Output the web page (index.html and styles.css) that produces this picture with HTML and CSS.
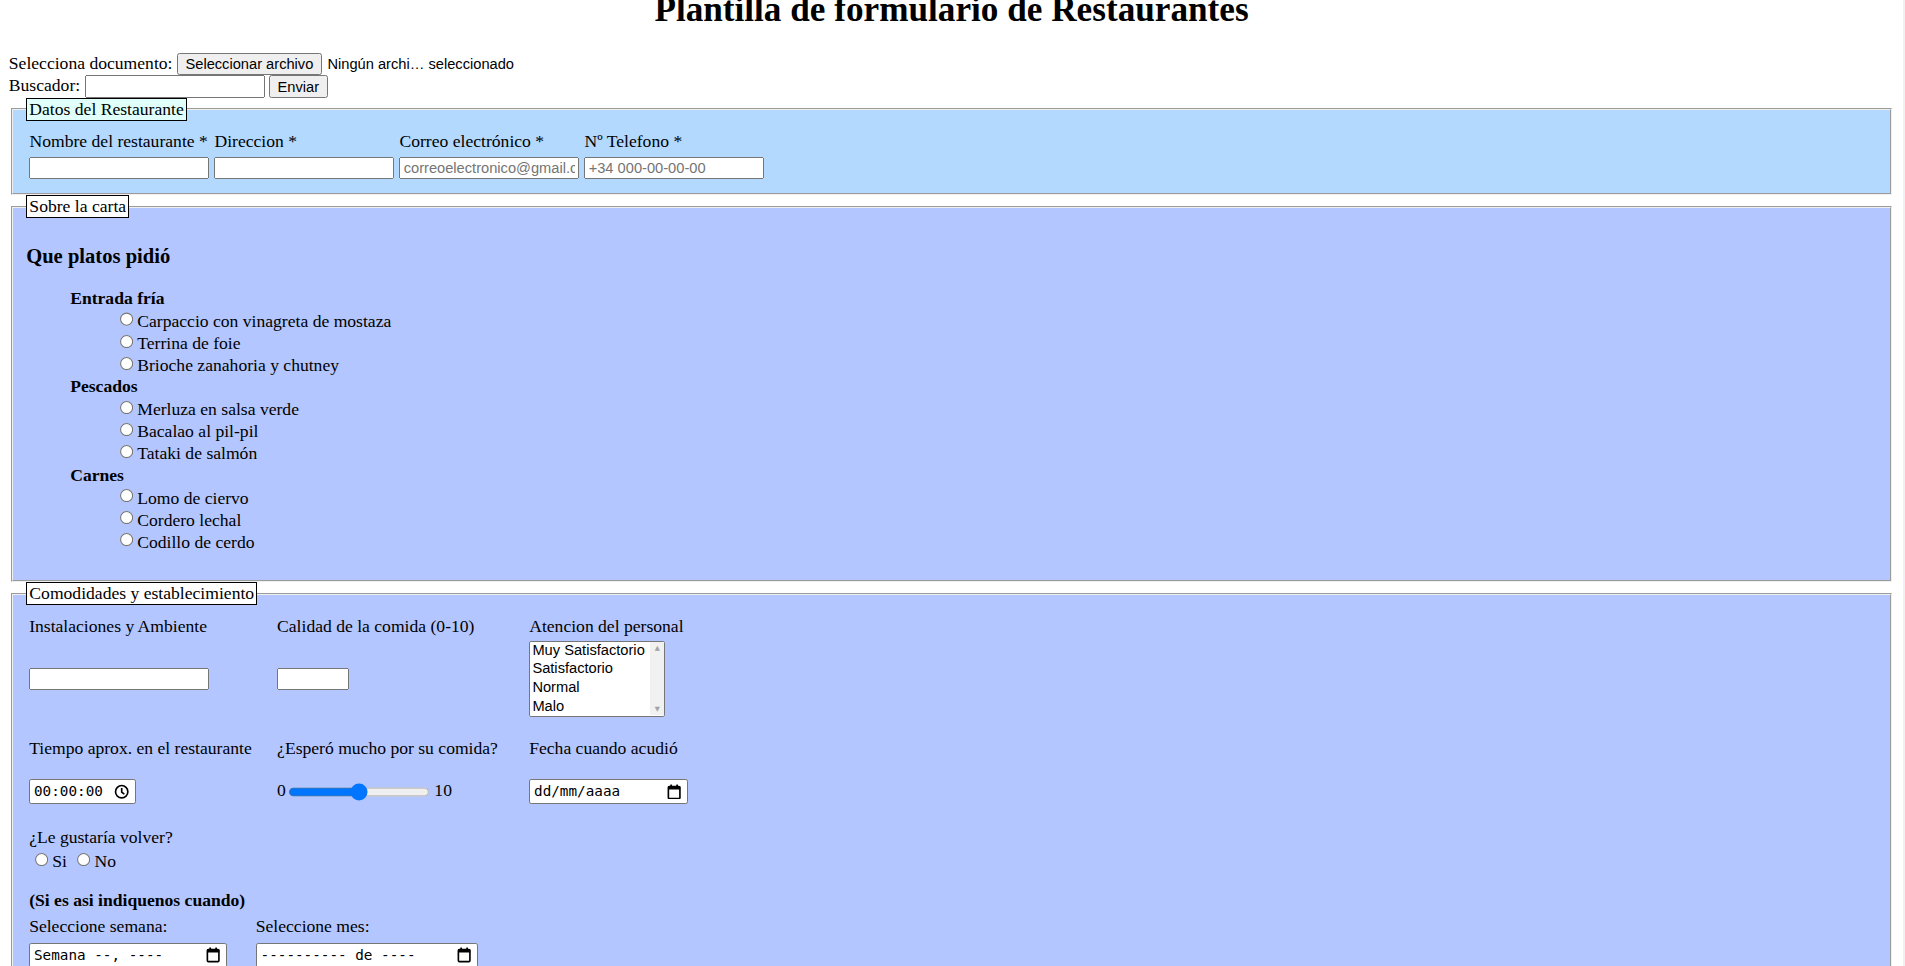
FILE: index.html
```html
<!DOCTYPE html>
<html lang="es">
<head>
<meta charset="utf-8">
<title>Plantilla de formulario de Restaurantes</title>
<link rel="stylesheet" href="styles.css">
</head>
<body>
<h1 class="title">Plantilla de formulario de Restaurantes</h1>
<form class="form">
  <div class="line">Selecciona documento: <button type="button" class="file-btn">Seleccionar archivo</button><span class="file-name">Ningún archi… seleccionado</span></div>
  <div class="line">Buscador: <input type="text" class="field"> <input type="submit" class="btn" value="Enviar"></div>

  <fieldset class="box box-datos">
    <legend class="tag tag-cyan">Datos del Restaurante</legend>
    <div class="datos-grid">
      <label class="lbl">Nombre del restaurante *</label>
      <label class="lbl">Direccion *</label>
      <label class="lbl">Correo electrónico *</label>
      <label class="lbl">Nº Telefono *</label>
      <input type="text" class="field">
      <input type="text" class="field">
      <input type="email" class="field" placeholder="correoelectronico@gmail.com">
      <input type="tel" class="field" placeholder="+34 000-00-00-00">
    </div>
  </fieldset>

  <fieldset class="box box-lila">
    <legend class="tag">Sobre la carta</legend>
    <h3 class="carta-title">Que platos pidió</h3>
    <div class="menu">
      <div class="group">
        <b class="group-name">Entrada fría</b>
        <div class="dishes">
          <label class="dish"><input type="radio" name="entrada" class="radio">Carpaccio con vinagreta de mostaza</label>
          <label class="dish"><input type="radio" name="entrada" class="radio">Terrina de foie</label>
          <label class="dish"><input type="radio" name="entrada" class="radio">Brioche zanahoria y chutney</label>
        </div>
      </div>
      <div class="group">
        <b class="group-name">Pescados</b>
        <div class="dishes">
          <label class="dish"><input type="radio" name="pescado" class="radio">Merluza en salsa verde</label>
          <label class="dish"><input type="radio" name="pescado" class="radio">Bacalao al pil-pil</label>
          <label class="dish"><input type="radio" name="pescado" class="radio">Tataki de salmón</label>
        </div>
      </div>
      <div class="group">
        <b class="group-name">Carnes</b>
        <div class="dishes">
          <label class="dish"><input type="radio" name="carne" class="radio">Lomo de ciervo</label>
          <label class="dish"><input type="radio" name="carne" class="radio">Cordero lechal</label>
          <label class="dish"><input type="radio" name="carne" class="radio">Codillo de cerdo</label>
        </div>
      </div>
    </div>
  </fieldset>

  <fieldset class="box box-lila">
    <legend class="tag">Comodidades y establecimiento</legend>
    <div class="amenities">
      <label class="lbl">Instalaciones y Ambiente</label>
      <label class="lbl">Calidad de la comida (0-10)</label>
      <label class="lbl">Atencion del personal</label>
      <div class="ctl"><input type="text" class="field"></div>
      <div class="ctl"><input type="text" class="field field-short"></div>
      <div class="ctl">
        <span class="list-wrap">
          <select class="rating" size="4">
            <option>Muy Satisfactorio</option>
            <option>Satisfactorio</option>
            <option>Normal</option>
            <option>Malo</option>
            <option>Muy Malo</option>
          </select>
          <span class="list-bar"><span class="list-arrow">▲</span><span class="list-arrow">▼</span></span>
        </span>
      </div>
      <label class="lbl lbl-2">Tiempo aprox. en el restaurante</label>
      <label class="lbl lbl-2">¿Esperó mucho por su comida?</label>
      <label class="lbl lbl-2">Fecha cuando acudió</label>
      <div class="ctl-2">
        <span class="fake fake-time"><span class="fake-text">00:00:00</span><svg class="ico" width="14" height="14" viewBox="0 0 14 14"><circle cx="7" cy="7" r="5.6" fill="none" stroke="#000" stroke-width="1.5"/><path d="M7 3.6V7.3L9.4 9.2" fill="none" stroke="#000" stroke-width="1.5"/></svg></span>
      </div>
      <div class="ctl-2 range-wrap">0<input type="range" class="range" min="0" max="10" value="5">10</div>
      <div class="ctl-2">
        <span class="fake fake-date"><span class="fake-text">dd/mm/aaaa</span><svg class="ico" width="13" height="14" viewBox="0 0 13 14"><rect x="1.25" y="2.25" width="10.5" height="11" rx="1" fill="none" stroke="#000" stroke-width="1.5"/><rect x="1" y="2" width="11" height="3" fill="#000"/><rect x="3" y="0.5" width="1.6" height="2.5" fill="#000"/><rect x="8.4" y="0.5" width="1.6" height="2.5" fill="#000"/></svg></span>
      </div>
    </div>

    <div class="return">
      <div class="return-q">¿Le gustaría volver?</div>
      <div class="return-opts"><label><input type="radio" name="volver" class="radio">Si</label> <label><input type="radio" name="volver" class="radio">No</label></div>
    </div>

    <p class="when"><b>(Si es asi indiquenos cuando)</b></p>
    <div class="period">
      <div class="period-item">
        <label class="lbl">Seleccione semana:</label>
        <span class="fake fake-week"><span class="fake-text">Semana --, ----</span><svg class="ico" width="13" height="14" viewBox="0 0 13 14"><rect x="1.25" y="2.25" width="10.5" height="11" rx="1" fill="none" stroke="#000" stroke-width="1.5"/><rect x="1" y="2" width="11" height="3" fill="#000"/><rect x="3" y="0.5" width="1.6" height="2.5" fill="#000"/><rect x="8.4" y="0.5" width="1.6" height="2.5" fill="#000"/></svg></span>
      </div>
      <div class="period-item">
        <label class="lbl">Seleccione mes:</label>
        <span class="fake fake-month"><span class="fake-text">---------- de ----</span><svg class="ico" width="13" height="14" viewBox="0 0 13 14"><rect x="1.25" y="2.25" width="10.5" height="11" rx="1" fill="none" stroke="#000" stroke-width="1.5"/><rect x="1" y="2" width="11" height="3" fill="#000"/><rect x="3" y="0.5" width="1.6" height="2.5" fill="#000"/><rect x="8.4" y="0.5" width="1.6" height="2.5" fill="#000"/></svg></span>
      </div>
    </div>
  </fieldset>
</form>
</body>
</html>
```

FILE: styles.css
```css
html {
  overflow: hidden;
  background: #fff;
  border-right: 2px solid #f1f1f1;
}

body {
  zoom: 1.1;
  margin: 0 8px 8px;
  font-family: "Liberation Serif", "Times New Roman", serif;
  font-size: 16px;
  color: #000;
}

.title {
  font-size: 32px;
  font-weight: bold;
  text-align: center;
  margin: -9.4px 0 21.44px;
}

input,
button,
select {
  font-family: "Liberation Sans", Arial, sans-serif;
  font-size: 13.333px;
}

.file-btn {
  margin: 0 5px 0 0;
}

.file-name {
  font-family: "Liberation Sans", Arial, sans-serif;
  font-size: 13.333px;
}

.field {
  width: 163.6px;
  box-sizing: border-box;
}

.field-short {
  width: 65.5px;
}

.box {
  margin: 0 2px;
}

.box-datos {
  background: #b3d9ff;
}

.box-lila {
  background: #b3c6ff;
}

.tag {
  border: 1px solid #000;
  background: #fff;
}

.tag-cyan {
  background: #e0fffa;
}

.datos-grid {
  display: grid;
  grid-template-columns: repeat(4, 163.6px);
  column-gap: 4.6px;
  row-gap: 4px;
  padding: 4px 3px 3px;
  justify-items: start;
}

.carta-title {
  font-size: 1.17em;
  margin: 18.72px 0 17.6px;
}

.menu {
  margin: 16px 0;
  padding-left: 40px;
  line-height: 20px;
}

.group-name {
  display: block;
  height: 20.05px;
}

.dishes {
  padding-left: 40px;
}

.dish {
  display: block;
  height: 20.05px;
}

.radio {
  margin: 3px 3px 0 5px;
}

.amenities {
  display: grid;
  grid-template-columns: 225.4px 229.2px auto;
  align-items: center;
  justify-items: start;
  padding: 4px 0 0 2.7px;
}

.ctl {
  margin-top: 3.5px;
}

.lbl-2 {
  margin-top: 19.1px;
}

.ctl-2 {
  margin-top: 18.4px;
}

.list-wrap {
  position: relative;
  display: inline-block;
  vertical-align: top;
}

.rating {
  display: block;
  width: 123.6px;
  height: 69px;
  scrollbar-width: none;
}

.list-bar {
  position: absolute;
  top: 1px;
  right: 1px;
  bottom: 1px;
  width: 12.5px;
  display: flex;
  flex-direction: column;
  justify-content: space-between;
  align-items: center;
  background: #f1f1f1;
  pointer-events: none;
}

.list-arrow {
  font-family: "DejaVu Sans", sans-serif;
  font-size: 6px;
  line-height: 11px;
  color: #a3a3a3;
}

.fake {
  display: inline-flex;
  align-items: center;
  justify-content: space-between;
  box-sizing: border-box;
  height: 22.7px;
  padding: 0 5px 0 3.5px;
  border: 1px solid #767676;
  border-radius: 2px;
  background: #fff;
  font-family: "DejaVu Sans Mono", "Liberation Mono", monospace;
  font-size: 13px;
  vertical-align: middle;
}

.fake-time {
  width: 97px;
}

.fake-date {
  width: 144.5px;
}

.fake-week {
  width: 180px;
}

.fake-month {
  width: 202px;
}

.ico {
  flex: none;
}

.range-wrap {
  white-space: nowrap;
}

.range {
  vertical-align: middle;
  margin-right: 4px;
}

.return {
  margin-top: 21.4px;
  padding-left: 2.7px;
}

.return-opts {
  margin-top: 1px;
}

.when {
  margin: 16.5px 0 0;
  padding-left: 2.7px;
}

.period {
  display: grid;
  grid-template-columns: 206px auto;
  justify-items: start;
  padding-left: 2.7px;
  margin-top: 4px;
}

.period-item {
  display: flex;
  flex-direction: column;
  align-items: flex-start;
  row-gap: 5.6px;
}
```
